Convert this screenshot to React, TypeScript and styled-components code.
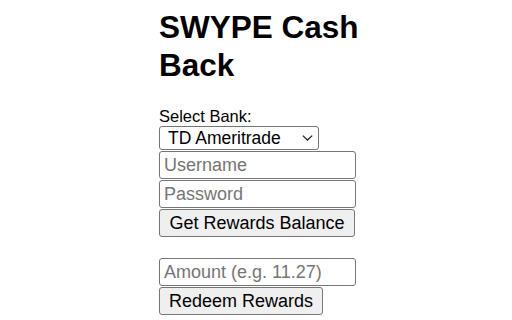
import React from 'react';
import styled, { createGlobalStyle } from 'styled-components';

const GlobalStyle = createGlobalStyle`
  html, body {
    margin: 0;
    padding: 0;
    background: #ffffff;
  }
  body {
    font-family: "Liberation Sans", Arial, Helvetica, sans-serif;
    color: #000;
  }
`;

const Page = styled.div`
  display: flex;
  justify-content: center;
  padding-top: 8px;
`;

const Column = styled.div`
  width: 197px;
  margin-left: 3px;
  display: flex;
  flex-direction: column;
  align-items: flex-start;
`;

const Title = styled.h1`
  width: 215px;
  margin: 0;
  font-size: 31.5px;
  line-height: 38px;
  font-weight: 700;
`;

const Label = styled.label`
  margin-top: 22px;
  font-size: 16.5px;
  line-height: 20px;
`;

const SelectWrap = styled.div`
  position: relative;
  width: 160px;
  height: 24px;
`;

const Select = styled.select`
  appearance: none;
  -webkit-appearance: none;
  box-sizing: border-box;
  width: 100%;
  height: 100%;
  margin: 0;
  padding: 0 24px 0 8px;
  font-family: inherit;
  font-size: 17.5px;
  color: #000;
  background: #fff;
  border: 1px solid #767676;
  border-radius: 3px;
`;

const Chevron = styled.svg`
  position: absolute;
  right: 6px;
  top: 9px;
  pointer-events: none;
`;

const Input = styled.input<{ $gapTop?: number }>`
  box-sizing: border-box;
  width: 197px;
  height: 28px;
  margin: ${(p) => p.$gapTop ?? 1}px 0 0;
  padding: 0 4px;
  font-family: inherit;
  font-size: 18px;
  color: #000;
  background: #fff;
  border: 1px solid #767676;
  border-radius: 3px;

  &::placeholder {
    color: #757575;
  }
`;

const Button = styled.button<{ $width: number }>`
  box-sizing: border-box;
  width: ${(p) => p.$width}px;
  height: 28px;
  margin: 1px 0 0;
  padding: 0;
  font-family: inherit;
  font-size: 18px;
  color: #000;
  background: #efefef;
  border: 1px solid #767676;
  border-radius: 3px;
`;

export default function App() {
  return (
    <>
      <GlobalStyle />
      <Page>
        <Column>
          <Title>SWYPE Cash Back</Title>
          <Label htmlFor="bank">Select Bank:</Label>
          <SelectWrap>
            <Select id="bank" defaultValue="td">
              <option value="td">TD Ameritrade</option>
            </Select>
            <Chevron width="11" height="6" viewBox="0 0 11 6">
              <path d="M0.8 0.6 L5.5 5 L10.2 0.6" fill="none" stroke="#222" strokeWidth="1.3" />
            </Chevron>
          </SelectWrap>
          <Input placeholder="Username" />
          <Input type="password" placeholder="Password" />
          <Button $width={196}>Get Rewards Balance</Button>
          <Input placeholder="Amount (e.g. 11.27)" $gapTop={21} />
          <Button $width={164}>Redeem Rewards</Button>
        </Column>
      </Page>
    </>
  );
}
